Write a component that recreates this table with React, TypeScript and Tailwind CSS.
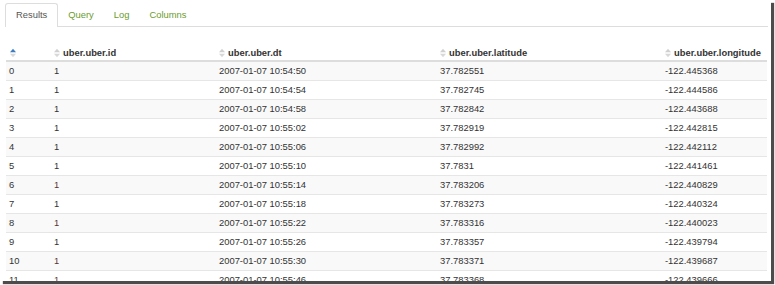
import React from "react";

const rows = [
  ["0", "1", "2007-01-07 10:54:50", "37.782551", "-122.445368"],
  ["1", "1", "2007-01-07 10:54:54", "37.782745", "-122.444586"],
  ["2", "1", "2007-01-07 10:54:58", "37.782842", "-122.443688"],
  ["3", "1", "2007-01-07 10:55:02", "37.782919", "-122.442815"],
  ["4", "1", "2007-01-07 10:55:06", "37.782992", "-122.442112"],
  ["5", "1", "2007-01-07 10:55:10", "37.7831", "-122.441461"],
  ["6", "1", "2007-01-07 10:55:14", "37.783206", "-122.440829"],
  ["7", "1", "2007-01-07 10:55:18", "37.783273", "-122.440324"],
  ["8", "1", "2007-01-07 10:55:22", "37.783316", "-122.440023"],
  ["9", "1", "2007-01-07 10:55:26", "37.783357", "-122.439794"],
  ["10", "1", "2007-01-07 10:55:30", "37.783371", "-122.439687"],
  ["11", "1", "2007-01-07 10:55:46", "37.783368", "-122.439666"],
];

const headers = ["", "uber.uber.id", "uber.uber.dt", "uber.uber.latitude", "uber.uber.longitude"];

function SortIcon({ active }: { active?: boolean }) {
  return (
    <svg width="6" height="10" viewBox="0 0 6 10" className="shrink-0">
      <polygon points="0,4.3 3,0.8 6,4.3" fill={active ? "#3d7cc0" : "#d0d0d0"} />
      <polygon points="0,5.7 6,5.7 3,9.2" fill="#d8d8d8" />
    </svg>
  );
}

export default function App() {
  return (
    <div className="w-[775px] h-[285px] bg-white" style={{ fontFamily: '"Liberation Sans", Arial, sans-serif' }}>
      {/* framed screenshot */}
      <div className="w-[771px] h-[281px] bg-white overflow-hidden shadow-[3px_3px_1px_rgba(0,0,0,0.7)] pt-[3px] pl-[5px] pr-[3px]">
        {/* Tabs */}
        <ul className="flex h-[24px] border-b border-[#dddddd] text-[9.4px]">
          <li className="h-[24px] px-[10px] flex items-center bg-white border border-b-0 border-[#dddddd] rounded-t-[3px] text-[#555555]">
            Results
          </li>
          <li className="h-[24px] px-[10px] flex items-center text-[#6a9c2c]">Query</li>
          <li className="h-[24px] px-[10px] flex items-center text-[#6a9c2c]">Log</li>
          <li className="h-[24px] px-[10px] flex items-center text-[#6a9c2c]">Columns</li>
        </ul>

        {/* Table */}
        <div className="mt-[15px] ml-[1px] w-[761px] text-[9.4px] text-[#333333]">
          {/* header */}
          <div className="grid grid-cols-[45px_165px_221px_225px_1fr] h-[20px] border-b-2 border-[#dddddd] font-bold">
            {headers.map((h, i) => (
              <div key={i} className={`flex items-end pb-[2px] gap-[3px] ${i === 0 ? "pl-[4px]" : "pl-[3px]"}`}>
                <SortIcon active={i === 0} />
                {h && <span className="leading-[11px]">{h}</span>}
              </div>
            ))}
          </div>
          {/* rows */}
          {rows.map((r, i) => (
            <div
              key={i}
              className={`grid grid-cols-[45px_165px_221px_225px_1fr] h-[19px] border-b border-[#e6e6e6] ${
                i % 2 === 0 ? "bg-[#f9f9f9]" : "bg-white"
              }`}
            >
              {r.map((c, j) => (
                <div
                  key={j}
                  className={`flex items-center pl-[3px] ${
                    j === 1 && (i === 6 || i === 8 || i === 10 || i === 11) ? "text-[#5a3434]" : ""
                  }`}
                >
                  {c}
                </div>
              ))}
            </div>
          ))}
        </div>
      </div>
    </div>
  );
}
